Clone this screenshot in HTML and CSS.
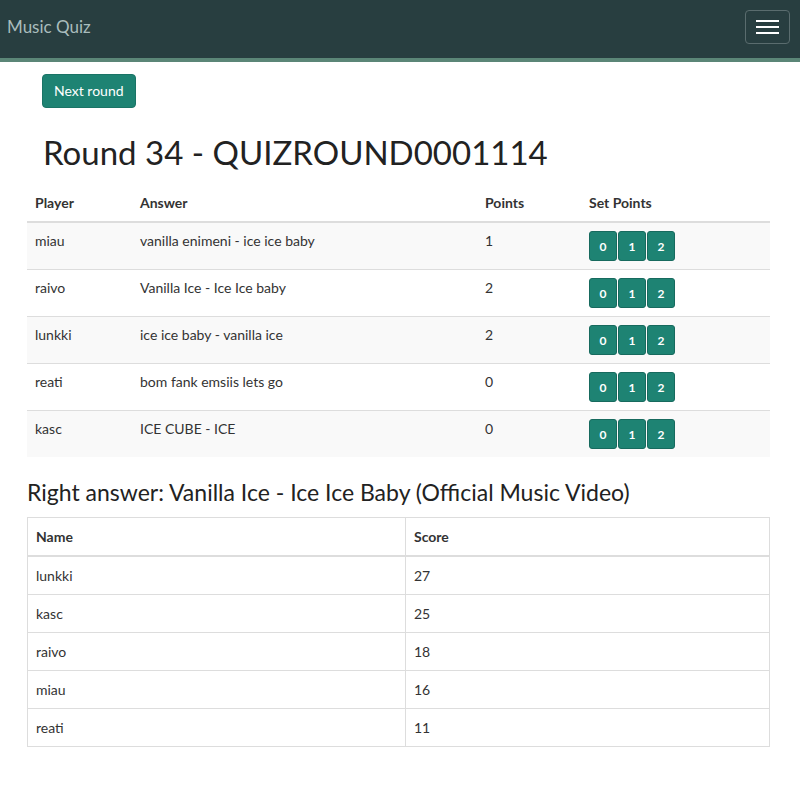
FILE: index.html
```html
<!DOCTYPE html>
<html lang="en">
<head>
    <meta charset="UTF-8">
    <meta name="viewport" content="width=device-width, initial-scale=1.0">
    <title>Music Quiz</title>
    <link rel="stylesheet" href="styles.css">
</head>
<body>
    <nav class="navbar">
        <a class="brand" href="#">Music Quiz</a>
        <button class="toggler" type="button">
            <span class="bar"></span>
            <span class="bar"></span>
            <span class="bar"></span>
        </button>
    </nav>

    <div class="container">
        <div class="actions">
            <button class="btn">Next round</button>
        </div>
        <h1 class="round-title">Round 34 - QUIZROUND0001114</h1>

        <table class="table table-striped">
            <thead>
                <tr>
                    <th class="col-player">Player</th>
                    <th class="col-answer">Answer</th>
                    <th class="col-points">Points</th>
                    <th>Set Points</th>
                </tr>
            </thead>
            <tbody>
                <tr>
                    <td>miau</td>
                    <td>vanilla enimeni - ice ice baby</td>
                    <td>1</td>
                    <td><div class="btn-group"><button class="btn-sm">0</button><button class="btn-sm">1</button><button class="btn-sm">2</button></div></td>
                </tr>
                <tr>
                    <td>raivo</td>
                    <td>Vanilla Ice - Ice Ice baby</td>
                    <td>2</td>
                    <td><div class="btn-group"><button class="btn-sm">0</button><button class="btn-sm">1</button><button class="btn-sm">2</button></div></td>
                </tr>
                <tr>
                    <td>lunkki</td>
                    <td>ice ice baby - vanilla ice</td>
                    <td>2</td>
                    <td><div class="btn-group"><button class="btn-sm">0</button><button class="btn-sm">1</button><button class="btn-sm">2</button></div></td>
                </tr>
                <tr>
                    <td>reati</td>
                    <td>bom fank emsiis lets go</td>
                    <td>0</td>
                    <td><div class="btn-group"><button class="btn-sm">0</button><button class="btn-sm">1</button><button class="btn-sm">2</button></div></td>
                </tr>
                <tr>
                    <td>kasc</td>
                    <td>ICE CUBE - ICE</td>
                    <td>0</td>
                    <td><div class="btn-group"><button class="btn-sm">0</button><button class="btn-sm">1</button><button class="btn-sm">2</button></div></td>
                </tr>
            </tbody>
        </table>

        <h3 class="right-answer">Right answer: Vanilla Ice - Ice Ice Baby (Official Music Video)</h3>

        <table class="table table-bordered">
            <thead>
                <tr>
                    <th class="col-name">Name</th>
                    <th>Score</th>
                </tr>
            </thead>
            <tbody>
                <tr><td>lunkki</td><td>27</td></tr>
                <tr><td>kasc</td><td>25</td></tr>
                <tr><td>raivo</td><td>18</td></tr>
                <tr><td>miau</td><td>16</td></tr>
                <tr><td>reati</td><td>11</td></tr>
            </tbody>
        </table>
    </div>
</body>
</html>
```

FILE: styles.css
```css
* {
    margin: 0;
    padding: 0;
    box-sizing: border-box;
}

body {
    font-family: Lato, "Liberation Sans", sans-serif;
    font-size: 14px;
    line-height: 20px;
    color: #333;
    background: #fff;
}

.navbar {
    height: 62px;
    background: #283e40;
    border-bottom: 4px solid #5b8677;
    display: flex;
    align-items: center;
    justify-content: space-between;
    padding: 0 10px 4px 7px;
}

.brand {
    color: #a9bcbc;
    font-size: 17px;
    text-decoration: none;
}

.toggler {
    width: 45px;
    height: 34px;
    background: transparent;
    border: 1px solid #5a6c6e;
    border-radius: 4px;
    display: flex;
    flex-direction: column;
    align-items: center;
    justify-content: center;
    gap: 4px;
}

.bar {
    display: block;
    width: 23px;
    height: 2px;
    background: #fff;
}

.container {
    padding: 12px 30px 40px 27px;
}

.actions {
    padding-left: 15px;
}

.btn {
    background: #1e8373;
    color: #fff;
    border: 1px solid #1a7466;
    border-radius: 4px;
    padding: 6px 11px;
    font-family: inherit;
    font-size: 14px;
    line-height: 20px;
}

.round-title {
    font-size: 33px;
    font-weight: 400;
    line-height: 44px;
    color: #222;
    margin: 22px 0 11px 16px;
}

.table {
    width: 100%;
    border-collapse: collapse;
}

.table th,
.table td {
    text-align: left;
    vertical-align: top;
    padding: 8px;
    border-top: 1px solid #ddd;
}

.table thead th {
    border-top: none;
    border-bottom: 2px solid #ddd;
    font-weight: 700;
}

.table-striped tbody tr:nth-child(odd) {
    background: #f9f9f9;
}

.col-player { width: 105px; }
.col-answer { width: 345px; }
.col-points { width: 104px; }
.col-name { width: 378px; }

.btn-group {
    display: flex;
    gap: 1px;
}

.btn-sm {
    width: 28px;
    height: 30px;
    background: #1e8373;
    color: #fff;
    border: 1px solid #176a5e;
    border-radius: 3px;
    font-family: inherit;
    font-size: 12px;
    font-weight: 700;
}

.right-answer {
    font-size: 23px;
    font-weight: 400;
    line-height: 30px;
    color: #222;
    margin: 20px 0 10px;
}

.table-bordered {
    border: 1px solid #ddd;
}

.table-bordered th,
.table-bordered td {
    border: 1px solid #ddd;
    line-height: 21px;
}

.table-bordered thead th {
    border-bottom: 2px solid #ddd;
}
```
